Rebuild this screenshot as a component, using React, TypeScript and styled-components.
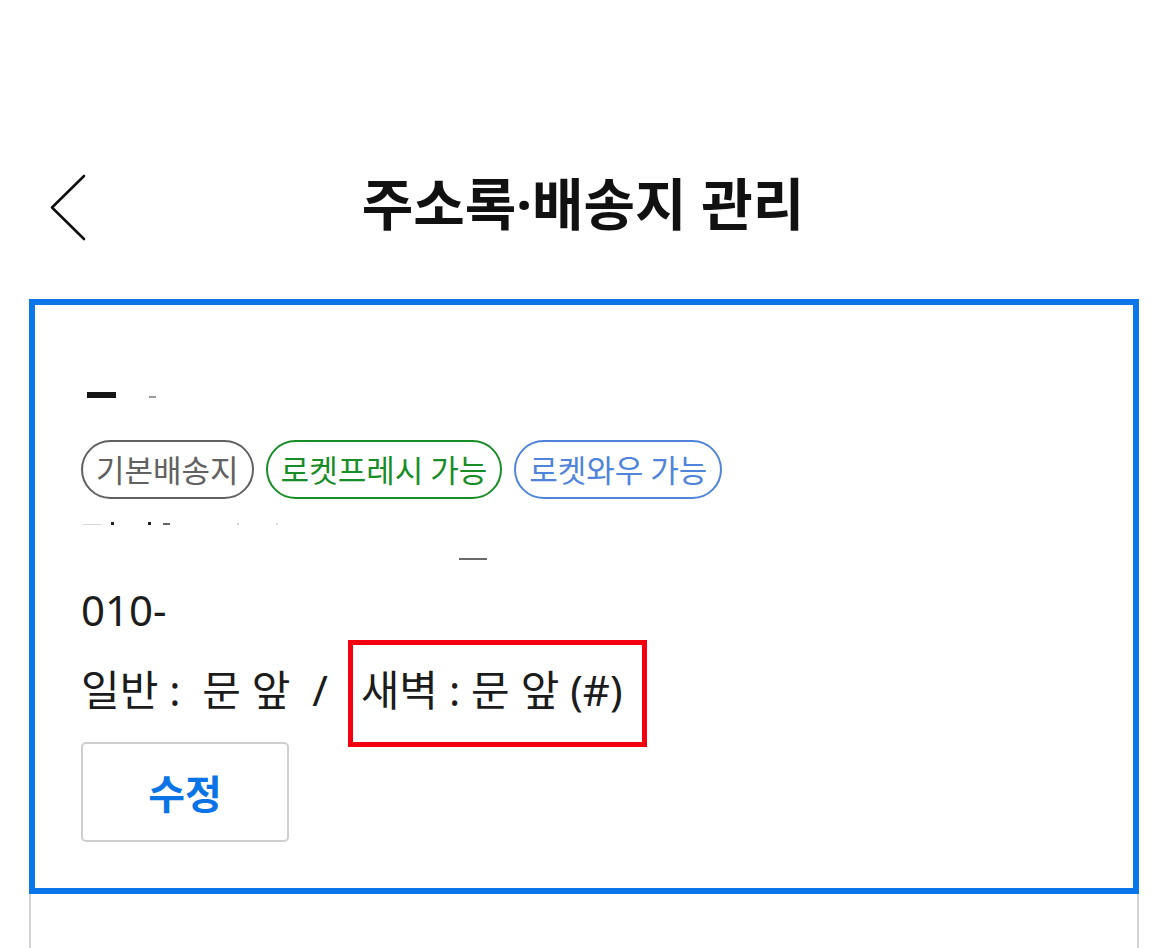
import React from "react";
import styled, { createGlobalStyle } from "styled-components";

const GlobalStyle = createGlobalStyle`
  html, body {
    margin: 0;
    padding: 0;
    background: #fff;
  }
  body {
    font-family: "Noto Sans", "Noto Sans CJK KR", sans-serif;
    color: #1c1c1c;
  }
`;

const Page = styled.div`
  width: 1166px;
  height: 948px;
  background: #fff;
  overflow: hidden;
`;

const Header = styled.header`
  display: grid;
  grid-template-columns: 1fr auto 1fr;
  align-items: center;
  height: 114px;
  margin-top: 150px;
`;

const BackButton = styled.button`
  justify-self: start;
  display: flex;
  margin-left: 48px;
  padding: 0;
  border: 0;
  background: none;
  cursor: pointer;
`;

const Title = styled.h1`
  margin: 0;
  padding-bottom: 8px;
  font-family: "Noto Sans", "Noto Sans CJK KR", sans-serif;
  font-size: 56px;
  font-weight: 700;
  line-height: 1;
  color: #111;
`;

const AddressList = styled.ul`
  list-style: none;
  margin: 35px 27px 0 29px;
  padding: 0;
`;

const AddressItem = styled.li<{ $selected?: boolean }>`
  display: flex;
  flex-direction: column;
  align-items: flex-start;
  border-style: solid;
  border-color: ${p => (p.$selected ? "#0a76ea" : "#d2d2d2")};
  border-width: ${p => (p.$selected ? "6px" : "0 2px 2px")};
  padding: ${p => (p.$selected ? "46px 40px 46px 46px" : "0 40px 0 50px")};
  min-height: ${p => (p.$selected ? "auto" : "200px")};
`;

const RedactRow = styled.div<{ $h: number }>`
  display: flex;
  align-items: flex-end;
  height: ${p => p.$h}px;
`;

const Bit = styled.span<{ $w: number; $h: number; $gap: number; $tone: string }>`
  display: block;
  width: ${p => p.$w}px;
  height: ${p => p.$h}px;
  margin-left: ${p => p.$gap}px;
  background: ${p => p.$tone};
`;

const ChipRow = styled.div`
  display: flex;
  gap: 12px;
  margin-top: 42px;
`;

const chipColors = {
  gray: "#616161",
  green: "#188d27",
  blue: "#4f84da",
};

const Chip = styled.span<{ $tone: keyof typeof chipColors }>`
  display: inline-flex;
  align-items: center;
  box-sizing: border-box;
  height: 59px;
  padding: 0 13px 2px;
  border: 2.5px solid ${p => chipColors[p.$tone]};
  border-radius: 30px;
  font-family: "Noto Sans CJK KR", sans-serif;
  font-size: 31px;
  line-height: 1;
  color: ${p => chipColors[p.$tone]};
  white-space: nowrap;
`;

const Phone = styled.div`
  margin-top: 24px;
  font-size: 42px;
  line-height: 52px;
`;

const Memo = styled.div`
  margin-top: 28px;
  font-size: 42px;
  line-height: 52px;
  white-space: pre;
`;

const Marked = styled.span`
  position: relative;

  &::before {
    content: "";
    position: absolute;
    left: -13px;
    right: -24px;
    top: -21px;
    bottom: -29px;
    border: 5px solid #f2000f;
    pointer-events: none;
  }
`;

const EditButton = styled.button`
  margin-top: 26px;
  width: 208px;
  height: 100px;
  border: 2px solid #cfcfcf;
  border-radius: 5px;
  background: #fff;
  font-family: "Noto Sans CJK KR", sans-serif;
  font-size: 40px;
  font-weight: 700;
  color: #0a74e6;
  cursor: pointer;
`;

const ChevronLeft = () => (
  <svg width="40" height="71" viewBox="0 0 40 71" fill="none">
    <polyline
      points="36,4 4,35.5 36,67"
      stroke="#111"
      strokeWidth="2.6"
      strokeLinecap="round"
      strokeLinejoin="round"
    />
  </svg>
);

export default function App() {
  return (
    <Page>
      <GlobalStyle />
      <Header>
        <BackButton aria-label="뒤로">
          <ChevronLeft />
        </BackButton>
        <Title>주소록·배송지 관리</Title>
      </Header>

      <AddressList>
        <AddressItem $selected>
          <RedactRow $h={47}>
            <Bit $w={29} $h={6} $gap={6} $tone="#151515" />
            <Bit $w={7} $h={2} $gap={33} $tone="#9a9a9a" />
          </RedactRow>

          <ChipRow>
            <Chip $tone="gray">기본배송지</Chip>
            <Chip $tone="green">로켓프레시 가능</Chip>
            <Chip $tone="blue">로켓와우 가능</Chip>
          </ChipRow>

          <RedactRow $h={26}>
            <Bit $w={18} $h={1} $gap={2} $tone="#d6d6d6" />
            <Bit $w={3} $h={3} $gap={10} $tone="#222" />
            <Bit $w={3} $h={3} $gap={34} $tone="#222" />
            <Bit $w={7} $h={2} $gap={12} $tone="#666" />
            <Bit $w={2} $h={2} $gap={67} $tone="#d0d0d0" />
            <Bit $w={2} $h={2} $gap={37} $tone="#dcdcdc" />
          </RedactRow>
          <RedactRow $h={35}>
            <Bit $w={28} $h={2} $gap={378} $tone="#6a6a6a" />
          </RedactRow>

          <Phone>010-</Phone>
          <Memo>
            {"일반 :  문 앞  /   "}
            <Marked>새벽 : 문 앞 (#)</Marked>
          </Memo>

          <EditButton>수정</EditButton>
        </AddressItem>
        <AddressItem />
      </AddressList>
    </Page>
  );
}
